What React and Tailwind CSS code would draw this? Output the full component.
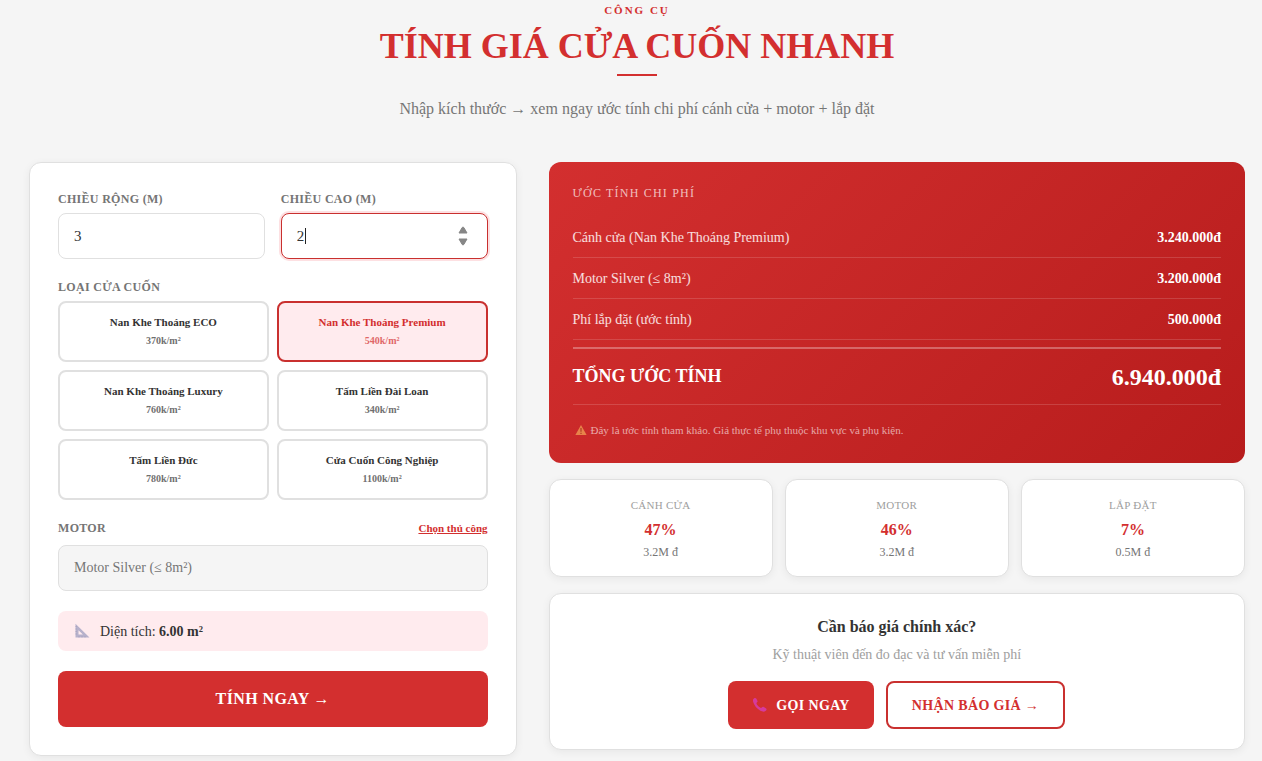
import { useState } from 'react';

const DOORS = [
  { id: 'eco', name: 'Nan Khe Thoáng ECO', price: 370 },
  { id: 'premium', name: 'Nan Khe Thoáng Premium', price: 540 },
  { id: 'luxury', name: 'Nan Khe Thoáng Luxury', price: 760 },
  { id: 'dailoan', name: 'Tấm Liền Đài Loan', price: 340 },
  { id: 'duc', name: 'Tấm Liền Đức', price: 780 },
  { id: 'congnghiep', name: 'Cửa Cuốn Công Nghiệp', price: 1100 },
];

const MOTOR = { name: 'Motor Silver (≤ 8m²)', price: 3200 };
const INSTALL = 500;

// prices are kept in thousands of đồng
const formatVnd = (k) => String(Math.round(k * 1000)).replace(/\B(?=(\d{3})+$)/g, '.') + 'đ';

function RulerIcon() {
  return (
    <svg className="w-4 h-4" viewBox="0 0 16 16" aria-hidden="true">
      <path fillRule="evenodd" d="M1.500 .8 15.500 14.500H1.500V.8ZM4.500 7.200V11.500h4.400L4.500 7.200Z" fill="#b7b1cb" />
      <path d="M1.500 3.500h1.200M1.500 6h1.200M1.500 8.500h1.200M1.500 11h1.200M5 14.500v-1.200M8 14.500v-1.200M11 14.500v-1.200" stroke="#9a94b3" strokeWidth="0.6" />
    </svg>
  );
}

function WarningIcon() {
  return (
    <svg className="w-3 h-3" viewBox="0 0 12 12" aria-hidden="true">
      <path d="M6 .9 11.6 11H.4L6 .9Z" fill="#e8834a" />
      <path d="M6 4v3.7M6 8.7v1.2" stroke="#a83a22" strokeWidth="1.1" />
    </svg>
  );
}

function PhoneIcon() {
  return (
    <svg className="w-4 h-4" viewBox="0 0 16 16" aria-hidden="true">
      <path
        d="M2.2 1.2c.9-.5 1.7-.2 2.2.6l1 1.9c.4.8.1 1.3-.6 1.9-.5.5-.4 1 .1 1.8.8 1.3 1.900 2.400 3.200 3.200.7.4 1.200.4 1.700-.1.6-.7 1.200-.9 2-.4l2 1.200c.9.6 1 1.400.3 2.200-.9 1.100-2.400 1.500-4.200.8C5.900 12.900 2.600 9.300 1.200 5 .7 3.300 1 1.900 2.200 1.200Z"
        fill="#d63a9c"
      />
    </svg>
  );
}

function SpinnerArrows() {
  return (
    <svg className="absolute right-5 top-3 w-2.5 h-[22px]" viewBox="0 0 10 22" aria-hidden="true">
      <path
        d="M4.2 2.5 1 8h8L5.8 2.500Q5 1.400 4.200 2.500ZM4.200 19.500 1 14h8l-3.200 5.500Q5 20.600 4.200 19.500Z"
        fill="#868686"
        stroke="#868686"
        strokeLinejoin="round"
      />
    </svg>
  );
}

function SizeInput({ id, label, value, onChange, active }) {
  return (
    <div>
      <label htmlFor={id} className="block text-[12px] leading-4 font-bold tracking-wide text-[#757575] mb-1.5">
        {label}
      </label>
      <div className="relative">
        <input
          id={id}
          type="number"
          value={value}
          onChange={(e) => onChange(e.target.value)}
          className={`block w-full h-[46px] px-[15px] rounded-lg border bg-white text-[15px] text-[#333333] outline-none [appearance:textfield] ${
            active ? 'border-[#c9302f] shadow-[0_0_0_2px_#fde0e2] caret-transparent' : 'border-[#e0e0e0]'
          }`}
        />
        {active && (
          <>
            <span className="absolute left-6 top-[15px] w-px h-4 bg-[#222222]" />
            <SpinnerArrows />
          </>
        )}
      </div>
    </div>
  );
}

function DoorButton({ door, active, onSelect }) {
  return (
    <button
      type="button"
      onClick={onSelect}
      aria-pressed={active}
      className={`h-[61px] rounded-lg border-2 text-center font-bold ${
        active ? 'border-[#c9302f] bg-[#ffebee] text-[#d32f2f]' : 'border-[#e0e0e0] bg-white text-[#333333]'
      }`}
    >
      <span className="block text-[11px] leading-[18px]">{door.name}</span>
      <span className="block text-[10px] leading-5 opacity-70">{door.price}k/m²</span>
    </button>
  );
}

function CostRow({ label, value }) {
  return (
    <div className="flex items-center justify-between h-[41px] border-b border-white/15 text-[14px]">
      <span className="text-white/85">{label}</span>
      <span className="font-bold">{value}</span>
    </div>
  );
}

function ShareCard({ label, share, cost }) {
  return (
    <div className="h-[98px] pt-4 rounded-xl border border-[#e0e0e0] bg-white text-center shadow-[0_2px_8px_rgba(0,0,0,0.06)]">
      <p className="text-[11px] leading-[18px] tracking-wide text-[#9e9e9e]">{label}</p>
      <p className="mt-1 text-[16px] leading-6 font-bold text-[#d32f2f]">{Math.round(share * 100)}%</p>
      <p className="text-[12px] leading-5 text-[#757575]">{(cost / 1000).toFixed(1)}M đ</p>
    </div>
  );
}

export default function App() {
  const [width, setWidth] = useState('3');
  const [height, setHeight] = useState('2');
  const [doorId, setDoorId] = useState('premium');

  const door = DOORS.find((d) => d.id === doorId);
  const area = Number(width) * Number(height);
  const doorCost = area * door.price;
  const total = doorCost + MOTOR.price + INSTALL;

  return (
    <div className="min-h-screen bg-[#f5f5f5] pl-[29px] pr-[17px] pb-1 font-['Liberation_Serif',serif] text-[#333333]">
      <header className="flex flex-col items-center text-center">
        <p className="mt-0.5 text-[11px] leading-4 font-bold tracking-[2px] text-[#d32f2f]">CÔNG CỤ</p>
        <h1 className="mt-1.5 text-[36px] leading-[44px] font-bold text-[#d32f2f]">TÍNH GIÁ CỬA CUỐN NHANH</h1>
        <div className="mt-1.5 w-10 h-0.5 bg-[#d32f2f]" />
        <p className="mt-5 text-[16px] leading-[26px] text-[#757575]">
          Nhập kích thước → xem ngay ước tính chi phí cánh cửa + motor + lắp đặt
        </p>
      </header>

      <main className="mt-10 grid grid-cols-[7fr_10fr] items-start gap-8">
        <section className="p-7 rounded-xl border border-[#e0e0e0] bg-white shadow-[0_2px_8px_rgba(0,0,0,0.06)]">
          <div className="grid grid-cols-2 gap-4">
            <SizeInput id="width" label="CHIỀU RỘNG (M)" value={width} onChange={setWidth} />
            <SizeInput id="height" label="CHIỀU CAO (M)" value={height} onChange={setHeight} active />
          </div>

          <p className="mt-5 mb-1.5 text-[12px] leading-4 font-bold tracking-wide text-[#757575]">LOẠI CỬA CUỐN</p>
          <div className="grid grid-cols-2 gap-2">
            {DOORS.map((d) => (
              <DoorButton key={d.id} door={d} active={d.id === doorId} onSelect={() => setDoorId(d.id)} />
            ))}
          </div>

          <div className="mt-5 mb-1.5 flex items-start justify-between h-[19px]">
            <label htmlFor="motor" className="text-[12px] leading-4 font-bold tracking-wide text-[#757575]">
              MOTOR
            </label>
            <button type="button" className="text-[11px] leading-4 font-bold text-[#d32f2f] underline">
              Chọn thủ công
            </button>
          </div>
          <input
            id="motor"
            readOnly
            value={MOTOR.name}
            className="block w-full h-[46px] px-[15px] rounded-lg border border-[#e0e0e0] bg-[#f5f5f5] text-[14px] text-[#757575] outline-none"
          />

          <div className="mt-5 flex items-center gap-2.5 h-10 px-4 rounded-lg bg-[#ffebee] text-[14px]">
            <RulerIcon />
            <p>
              Diện tích: <strong>{area.toFixed(2)} m²</strong>
            </p>
          </div>

          <button
            type="button"
            className="mt-5 w-full h-14 rounded-lg bg-[#d32f2f] text-[16px] font-bold tracking-wide text-white"
          >
            TÍNH NGAY →
          </button>
        </section>

        <div>
          <section className="p-6 rounded-xl bg-linear-135 from-[#d32f2f] to-[#b71c1c] text-white">
            <h2 className="mb-4 text-[12px] leading-[15px] tracking-widest text-white/70">ƯỚC TÍNH CHI PHÍ</h2>
            <CostRow label={`Cánh cửa (${door.name})`} value={formatVnd(doorCost)} />
            <CostRow label={MOTOR.name} value={formatVnd(MOTOR.price)} />
            <CostRow label="Phí lắp đặt (ước tính)" value={formatVnd(INSTALL)} />
            <div className="mt-[7px] flex items-center justify-between h-[58px] border-t-2 border-b border-t-white/30 border-b-white/15 font-bold">
              <span className="text-[18px]">TỔNG ƯỚC TÍNH</span>
              <span className="text-[24px]">{formatVnd(total)}</span>
            </div>
            <p className="mt-4 flex items-center gap-1 pl-0.5 text-[11px] leading-[18px] text-white/60">
              <WarningIcon />
              Đây là ước tính tham khảo. Giá thực tế phụ thuộc khu vực và phụ kiện.
            </p>
          </section>

          <div className="mt-4 grid grid-cols-3 gap-3">
            <ShareCard label="CÁNH CỬA" share={doorCost / total} cost={doorCost} />
            <ShareCard label="MOTOR" share={MOTOR.price / total} cost={MOTOR.price} />
            <ShareCard label="LẮP ĐẶT" share={INSTALL / total} cost={INSTALL} />
          </div>

          <section className="mt-4 py-5 px-6 rounded-xl border border-[#e0e0e0] bg-white text-center shadow-[0_2px_8px_rgba(0,0,0,0.06)]">
            <h3 className="text-[16px] leading-[26px] font-bold">Cần báo giá chính xác?</h3>
            <p className="mt-1 text-[14px] leading-[21px] text-[#9e9e9e]">Kỹ thuật viên đến đo đạc và tư vấn miễn phí</p>
            <div className="mt-4 flex justify-center gap-3 text-[14px] font-bold tracking-wide">
              <button type="button" className="flex items-center gap-2 h-12 px-6 rounded-lg bg-[#d32f2f] text-white">
                <PhoneIcon />
                GỌI NGAY
              </button>
              <button type="button" className="h-12 px-6 rounded-lg border-2 border-[#c9302f] text-[#d32f2f]">
                NHẬN BÁO GIÁ →
              </button>
            </div>
          </section>
        </div>
      </main>
    </div>
  );
}
